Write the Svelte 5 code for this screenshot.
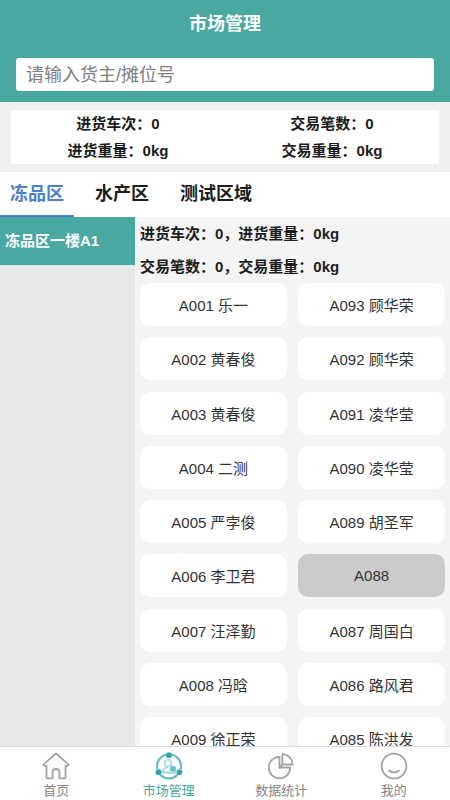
<script>
	const tabs = ['冻品区', '水产区', '测试区域'];
	const zones = ['冻品区一楼A1'];

	const stalls = [
		{ code: 'A001', owner: '乐一' },
		{ code: 'A093', owner: '顾华荣' },
		{ code: 'A002', owner: '黄春俊' },
		{ code: 'A092', owner: '顾华荣' },
		{ code: 'A003', owner: '黄春俊' },
		{ code: 'A091', owner: '凌华莹' },
		{ code: 'A004', owner: '二测' },
		{ code: 'A090', owner: '凌华莹' },
		{ code: 'A005', owner: '严孛俊' },
		{ code: 'A089', owner: '胡圣军' },
		{ code: 'A006', owner: '李卫君' },
		{ code: 'A088', owner: '' },
		{ code: 'A007', owner: '汪泽勤' },
		{ code: 'A087', owner: '周国白' },
		{ code: 'A008', owner: '冯晗' },
		{ code: 'A086', owner: '路风君' },
		{ code: 'A009', owner: '徐正荣' },
		{ code: 'A085', owner: '陈洪发' }
	];

	const pages = [
		{ id: 'home', label: '首页' },
		{ id: 'market', label: '市场管理' },
		{ id: 'stats', label: '数据统计' },
		{ id: 'mine', label: '我的' }
	];

	let keyword = $state('');
	let activeTab = $state(0);
	let activeZone = $state(0);
	let activePage = $state('market');

	let visible = $derived(stalls.filter((s) => (s.code + s.owner).includes(keyword.trim())));
</script>

<div class="page">
	<header>
		<h1>市场管理</h1>
		<input type="text" aria-label="搜索" placeholder="请输入货主/摊位号" bind:value={keyword} />
	</header>

	<section class="summary">
		<div class="totals">
			<span>进货车次：0</span>
			<span>交易笔数：0</span>
			<span>进货重量：0kg</span>
			<span>交易重量：0kg</span>
		</div>
	</section>

	<div class="tabs">
		{#each tabs as tab, i}
			<button class:active={i === activeTab} onclick={() => (activeTab = i)}>{tab}</button>
		{/each}
	</div>

	<div class="body">
		<aside>
			{#each zones as zone, i}
				<button class:active={i === activeZone} onclick={() => (activeZone = i)}>{zone}</button>
			{/each}
		</aside>

		<main>
			<p>进货车次：0，进货重量：0kg</p>
			<p>交易笔数：0，交易重量：0kg</p>
			<div class="stalls">
				{#each visible as stall (stall.code)}
					<button class:empty={!stall.owner}>{stall.code} {stall.owner}</button>
				{/each}
			</div>
		</main>
	</div>

	<nav>
		{#each pages as page}
			<a href="#{page.id}" class:active={page.id === activePage} onclick={() => (activePage = page.id)}>
				<svg viewBox="0 0 28 28" aria-hidden="true">
					{#if page.id === 'home'}
						<path d="M14 1.5 L1.6 12.4 Q1 13.6 2.4 13.8 H4.5 V25 Q4.5 26.3 5.8 26.3 H10.6 V20 Q10.6 17 14 17 Q17.4 17 17.4 20 V26.3 H22.2 Q23.5 26.3 23.5 25 V13.8 H25.6 Q27 13.6 26.4 12.4 Z" />
					{:else if page.id === 'market'}
						<g class="ring">
							<path d="M10.5 2.8 A12 12 0 0 0 2.2 16.5" />
							<path d="M17.5 2.8 A12 12 0 0 1 25.8 16.5" />
							<path d="M6 23.4 A12 12 0 0 0 22 23.4" />
						</g>
						<g class="dots">
							<circle cx="14" cy="3.3" r="3" />
							<circle cx="3.6" cy="20.3" r="3" />
							<circle cx="24.4" cy="20.3" r="3" />
						</g>
						<g class="people">
							<circle cx="13" cy="11" r="3.3" />
							<path d="M13 20.5 H7.8 Q7.8 15.4 12.6 15.4" />
							<circle class="solid" cx="18" cy="17" r="3.2" />
							<path d="M13 21 Q15 18.6 18 20.5 Q20 19.5 21 21 Z" />
						</g>
					{:else if page.id === 'stats'}
						<path d="M12.5 4.8 A10.7 10.7 0 1 0 23.2 15.5 H12.5 Z" />
						<path d="M15.4 2.2 A10.5 10.5 0 0 1 25.6 12.5 H15.4 Z" />
						<path d="M12.5 15.5 L15.4 12.5" />
					{:else}
						<circle cx="14" cy="14" r="12.4" />
						<path d="M9 18.5 Q14 22.5 19 18.5" />
					{/if}
				</svg>
				<span>{page.label}</span>
			</a>
		{/each}
	</nav>
</div>

<style>
	:global(body) {
		margin: 0;
	}

	.page {
		display: flex;
		flex-direction: column;
		height: 100vh;
		overflow: hidden;
		background: #f4f4f4;
		color: #1c1c1c;
		font-family: "Liberation Sans", "Noto Sans CJK SC", sans-serif;
		font-size: 15px;
	}

	button {
		margin: 0;
		padding: 0;
		border: none;
		background: none;
		color: inherit;
		font: inherit;
		cursor: pointer;
	}

	header {
		display: flex;
		flex-direction: column;
		gap: 10px;
		padding: 0 16px 11px;
		background: #49a9a0;
	}

	h1 {
		margin: 0;
		color: #fff;
		font-size: 18px;
		line-height: 48px;
		text-align: center;
	}

	input {
		box-sizing: border-box;
		width: 100%;
		height: 33px;
		padding: 2px 10px 0;
		border: none;
		border-radius: 3px;
		outline: none;
		background: #fff;
		font: inherit;
		font-size: 18px;
	}

	input::placeholder {
		color: #808080;
		opacity: 1;
	}

	.summary {
		padding: 8px 11px;
		background: #f0f0f0;
	}

	.totals {
		display: grid;
		grid-template-columns: 1fr 1fr;
		background: #fff;
		font-weight: bold;
		line-height: 27px;
		text-align: center;
	}

	.tabs {
		display: flex;
		gap: 11px;
		background: #fff;
	}

	.tabs button {
		padding: 2px 10px 0;
		border-bottom: 2px solid transparent;
		font-size: 18px;
		font-weight: bold;
		line-height: 41px;
	}

	.tabs .active {
		border-color: #4c80cc;
		color: #4c80cc;
	}

	.body {
		display: flex;
		flex: 1;
		min-height: 0;
	}

	aside {
		width: 30%;
		background: #e7e7e7;
	}

	aside button {
		width: 100%;
		padding: 0 5px;
		font-weight: bold;
		line-height: 48px;
		text-align: left;
	}

	aside .active {
		background: #49a9a0;
		color: #fff;
	}

	main {
		flex: 1;
		padding: 0 5px 12px;
		overflow-y: auto;
		scrollbar-width: none;
	}

	p {
		margin: 0;
		font-weight: bold;
		line-height: 33px;
	}

	.stalls {
		display: grid;
		grid-template-columns: 1fr 1fr;
		gap: 2.5vw;
	}

	.stalls button {
		height: 43px;
		border-radius: 10px;
		background: #fff;
		color: #333;
	}

	.stalls .empty {
		background: #cbcbcb;
	}

	nav {
		display: flex;
		border-top: 1px solid #dcdcdc;
		background: #fff;
	}

	nav a {
		display: flex;
		flex: 1;
		flex-direction: column;
		align-items: center;
		gap: 2px;
		padding-top: 5px;
		color: #858585;
		font-size: 13px;
		line-height: 18px;
		text-decoration: none;
	}

	nav .active {
		color: #49a9a0;
	}

	svg {
		width: 28px;
		height: 28px;
		fill: none;
		stroke: #a3a3a3;
		stroke-width: 1.8;
		stroke-linecap: round;
		stroke-linejoin: round;
	}

	.ring {
		stroke: #69bdc2;
		stroke-width: 2.2;
	}

	.dots {
		fill: #3aa4ad;
		stroke: none;
	}

	.people {
		stroke: #a9dbe2;
	}

	.people .solid {
		fill: #6cbfca;
		stroke: none;
	}
</style>
